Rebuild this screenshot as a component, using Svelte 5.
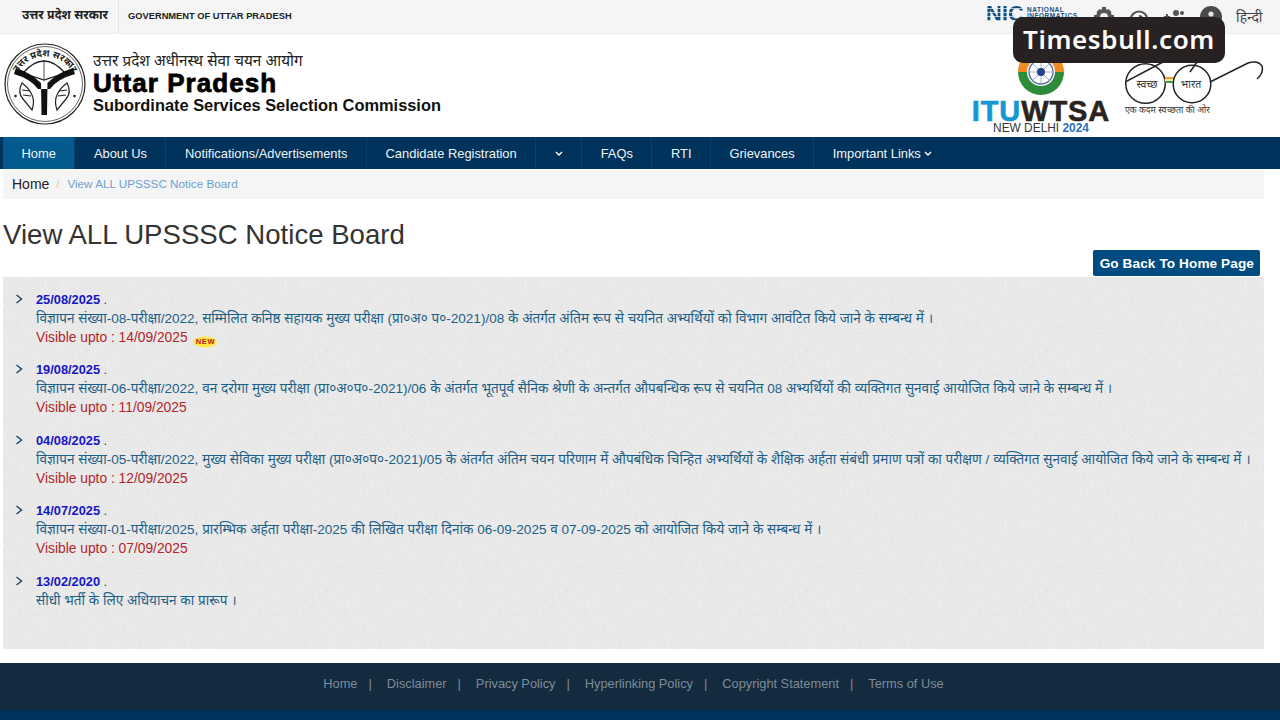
<script>
    const topIcons = ['gear', 'contrast', 'people', 'user'];

    const nav = [
        { label: 'Home', active: true },
        { label: 'About Us' },
        { label: 'Notifications/Advertisements' },
        { label: 'Candidate Registration' },
        { label: '', caret: true },
        { label: 'FAQs' },
        { label: 'RTI' },
        { label: 'Grievances' },
        { label: 'Important Links', caret: true }
    ];

    const notices = [
        {
            date: '25/08/2025',
            text: 'विज्ञापन संख्या-08-परीक्षा/2022, सम्मिलित कनिष्ठ सहायक मुख्य परीक्षा (प्रा०अ० प०-2021)/08 के अंतर्गत अंतिम रूप से चयनित अभ्यर्थियों को विभाग आवंटित किये जाने के सम्बन्ध में ।',
            upto: '14/09/2025',
            isNew: true
        },
        {
            date: '19/08/2025',
            text: 'विज्ञापन संख्या-06-परीक्षा/2022, वन दरोगा मुख्य परीक्षा (प्रा०अ०प०-2021)/06 के अंतर्गत भूतपूर्व सैनिक श्रेणी के अन्तर्गत औपबन्धिक रूप से चयनित 08 अभ्यर्थियों की व्यक्तिगत सुनवाई आयोजित किये जाने के सम्बन्ध में ।',
            upto: '11/09/2025'
        },
        {
            date: '04/08/2025',
            text: 'विज्ञापन संख्या-05-परीक्षा/2022, मुख्य सेविका मुख्य परीक्षा (प्रा०अ०प०-2021)/05 के अंतर्गत अंतिम चयन परिणाम में औपबंधिक चिन्हित अभ्यर्थियों के शैक्षिक अर्हता संबंधी प्रमाण पत्रों का परीक्षण / व्यक्तिगत सुनवाई आयोजित किये जाने के सम्बन्ध में ।',
            upto: '12/09/2025'
        },
        {
            date: '14/07/2025',
            text: 'विज्ञापन संख्या-01-परीक्षा/2025, प्रारम्भिक अर्हता परीक्षा-2025 की लिखित परीक्षा दिनांक 06-09-2025 व 07-09-2025 को आयोजित किये जाने के सम्बन्ध में ।',
            upto: '07/09/2025'
        },
        {
            date: '13/02/2020',
            text: 'सीधी भर्ती के लिए अधियाचन का प्रारूप ।'
        }
    ];

    const footerLinks = ['Home', 'Disclaimer', 'Privacy Policy', 'Hyperlinking Policy', 'Copyright Statement', 'Terms of Use'];
</script>

<div class="page">
    <div class="topbar">
        <div class="gov-hi">उत्तर प्रदेश सरकार</div>
        <div class="gov-en">GOVERNMENT OF UTTAR PRADESH</div>
        <div class="top-right">
            <div class="nic">
                <span class="nic-big">NIC</span>
                <span class="nic-small">NATIONAL<br>INFORMATICS</span>
            </div>
            {#each topIcons as icon}
                <div class="top-icon" class:user={icon === 'user'}>
                    <svg width="22" height="22" viewBox="0 0 22 22" fill="#555">
                        {#if icon === 'gear'}
                            <circle cx="11" cy="11" r="6" fill="none" stroke="#555" stroke-width="4"/>
                            <path d="M9 1h4v4H9zM9 17h4v4H9zM1 9h4v4H1zM17 9h4v4h-4z"/>
                            <path d="M3.5 6l3-3 3 3-3 3zM12.5 6l3-3 3 3-3 3zM3.5 16l3-3 3 3-3 3zM12.5 16l3-3 3 3-3 3z"/>
                        {:else if icon === 'contrast'}
                            <circle cx="11" cy="14" r="8.5" fill="none" stroke="#555" stroke-width="2.2"/>
                            <path d="M11 9a5 5 0 0 1 0 10z"/>
                        {:else if icon === 'people'}
                            <circle cx="14" cy="7" r="3"/>
                            <circle cx="20" cy="7" r="2"/>
                            <path d="M2 10h2V8h2v2h2v2H6v2H4v-2H2z"/>
                            <path d="M9 18c0-6 10-6 10 0z"/>
                        {:else}
                            <circle cx="11" cy="11" r="11" fill="#4a4a4a"/>
                            <circle cx="11" cy="8" r="2.6" fill="#e4e4e4"/>
                            <path d="M6.5 16l1.5-4.5h6l1.5 4.5z" fill="#e4e4e4"/>
                        {/if}
                    </svg>
                </div>
            {/each}
            <div class="lang">हिन्दी</div>
        </div>
    </div>

    <header class="head">
        <div class="brand">
            <svg class="emblem" width="82" height="82" viewBox="0 0 82 82">
                <circle cx="41" cy="41" r="40" fill="#fff" stroke="#222" stroke-width="1.2"/>
                <circle cx="41" cy="41" r="37.5" fill="none" stroke="#222" stroke-width="0.7"/>
                <path id="ring" d="M10.5 50a31 31 0 1 1 61 0" fill="none"/>
                <text class="emblem-text" text-anchor="middle"><textPath href="#ring" startOffset="50%">उत्तर प्रदेश सरकार</textPath></text>
                <path d="M19 30 Q40 6 61 30 L40 37 Z" fill="none" stroke="#222" stroke-width="1.3"/>
                <path d="M40 17v20" stroke="#222" stroke-width="0.8"/>
                <path d="M12 25 Q27 30 37 40 L37.5 72 L43 72 L43.5 40 Q53 30 69 25 L71 31 Q53 36 46 46 L34 46 Q27 36 10 31 Z" fill="#111"/>
                <path d="M18 40 q-5 9 1 16 l9 11 q3-9 0-15 q-3-7-10-12z" fill="#fff" stroke="#222" stroke-width="1.2"/>
                <path d="M63 40 q5 9-1 16 l-9 11 q-3-9 0-15 q3-7 10-12z" fill="#fff" stroke="#222" stroke-width="1.2"/>
                <path d="M18 47l8 1M19 52l8 1M63 47l-8 1M62 52l-8 1" stroke="#222" stroke-width="1.2"/>
                <circle cx="11.5" cy="53" r="1.3" fill="#222"/>
                <circle cx="70.5" cy="53" r="1.3" fill="#222"/>
            </svg>
            <div class="brand-text">
                <div class="brand-hi">उत्तर प्रदेश अधीनस्थ सेवा चयन आयोग</div>
                <div class="brand-up">Uttar Pradesh</div>
                <div class="brand-sub">Subordinate Services Selection Commission</div>
            </div>
        </div>
        <div class="logos">
            <div class="itu">
                <svg class="itu-mark" width="48" height="46" viewBox="0 0 48 46">
                    <path d="M1 23a23 23 0 0 1 46 0z" fill="#f08a24"/>
                    <path d="M1 23a23 23 0 0 0 46 0z" fill="#2e8b3a"/>
                    <circle cx="24" cy="23" r="14" fill="#fff"/>
                    <circle cx="24" cy="23" r="12" fill="none" stroke="#5a6fa8" stroke-width="1.4"/>
                    <path d="M24 11v24M12 23h24M15.5 14.5l17 17M32.5 14.5l-17 17" stroke="#8a9ac4" stroke-width="0.8"/>
                    <circle cx="24" cy="23" r="4" fill="#27408b"/>
                </svg>
                <div class="itu-word"><span class="itu-blue">ITU</span><span class="itu-dark">WTSA</span></div>
                <div class="itu-sub">NEW DELHI <span class="itu-year">2024</span></div>
            </div>
            <div class="swachh">
                <svg width="140" height="45" viewBox="0 0 140 45">
                    <circle cx="20.5" cy="23.5" r="19.8" fill="none" stroke="#222" stroke-width="1.5"/>
                    <circle cx="67" cy="24" r="18.8" fill="none" stroke="#222" stroke-width="1.5"/>
                    <path d="M40 18h8" stroke="#f0a030" stroke-width="2"/>
                    <path d="M40 20h8" stroke="#f3e7a0" stroke-width="2"/>
                    <path d="M40 22h8" stroke="#3f9a4a" stroke-width="2"/>
                    <path d="M0 22L38 2M65 12l7-10M85 22L123 3Q133 0 137 6Q139 13 132 19" fill="none" stroke="#222" stroke-width="1.5"/>
                    <text x="22" y="28" class="sw-t">स्वच्छ</text>
                    <text x="66" y="28" class="sw-t">भारत</text>
                </svg>
                <div class="sw-tag">एक कदम स्वच्छता की ओर</div>
            </div>
        </div>
    </header>

    <nav class="nav">
        {#each nav as item}
            <div class="nav-item" class:active={item.active}>
                {item.label}
                {#if item.caret}
                    <svg class="caret" width="8" height="6" viewBox="0 0 8 6"><path d="M1 1l3 3 3-3" fill="none" stroke="#fff" stroke-width="1.4"/></svg>
                {/if}
            </div>
        {/each}
    </nav>

    <div class="crumb">
        <span class="crumb-home">Home</span>
        <span class="crumb-sep">/</span>
        <span class="crumb-here">View ALL UPSSSC Notice Board</span>
    </div>

    <h1>View ALL UPSSSC Notice Board</h1>

    <div class="back-row">
        <div class="back">Go Back To Home Page</div>
    </div>

    <div class="board">
        {#each notices as n}
            <div class="notice">
                <svg class="arrow" width="8" height="10" viewBox="0 0 8 10"><path d="M1.5 1l5 4-5 4" fill="none" stroke="#1c4a6e" stroke-width="1.5"/></svg>
                <div class="notice-body">
                    <div class="date-line"><b>{n.date}</b> .</div>
                    <div class="text">{n.text}</div>
                    <div class="upto">
                        {#if n.upto}
                            Visible upto : {n.upto}
                        {/if}
                        {#if n.isNew}
                            <span class="new">NEW</span>
                        {/if}
                    </div>
                </div>
            </div>
        {/each}
    </div>

    <footer class="foot">
        <div class="foot-links">
            {#each footerLinks as link, i}
                <span>{link}</span>
                {#if i < footerLinks.length - 1}
                    <span class="foot-sep">|</span>
                {/if}
            {/each}
        </div>
    </footer>
    <div class="foot-bottom"></div>

    <div class="watermark">Timesbull.com</div>
</div>

<style>
    :global(body) {
        margin: 0;
        background: #fff;
    }

    .page {
        position: relative;
        width: 1280px;
        height: 720px;
        overflow: hidden;
        font-family: "Liberation Sans", "Noto Sans", sans-serif;
        color: #333;
    }

    .topbar {
        height: 33px;
        background: #f5f5f5;
        border-bottom: 1px solid #ececec;
        display: flex;
        align-items: center;
        padding-left: 22px;
    }

    .gov-hi {
        font-size: 12.3px;
        font-weight: 700;
        color: #222;
        padding-right: 10px;
        border-right: 1px solid #e6e6e6;
        height: 33px;
        line-height: 30px;
    }

    .gov-en {
        font-size: 9.3px;
        font-weight: 700;
        color: #222;
        padding: 0 0 2px 9px;
    }

    .top-right {
        margin-left: auto;
        display: flex;
        align-items: center;
        height: 33px;
    }

    .nic {
        display: flex;
        align-items: flex-start;
        gap: 3px;
        width: 101px;
        height: 33px;
        padding-top: 1px;
        box-sizing: border-box;
    }

    .nic-big {
        font-size: 22px;
        line-height: 25px;
        font-weight: 700;
        color: transparent;
        background: repeating-linear-gradient(180deg, #0f4f7f 0 3px, #a9c6da 3px 4px);
        -webkit-background-clip: text;
        background-clip: text;
    }

    .nic-small {
        font-size: 6.5px;
        font-weight: 700;
        line-height: 5.5px;
        letter-spacing: 0.55px;
        padding-top: 6px;
        color: #134f80;
    }

    .top-icon {
        width: 34.5px;
        display: flex;
        justify-content: center;
    }

    .top-icon.user {
        margin-left: 3px;
    }

    .lang {
        font-size: 14px;
        color: #444;
        margin-left: 8px;
        width: 44px;
    }

    .head {
        height: 103px;
        display: flex;
        justify-content: space-between;
        background: #fff;
    }

    .brand {
        display: flex;
        padding: 9px 0 0 4px;
        gap: 7px;
    }

    .emblem {
        display: block;
    }

    .emblem-text {
        font-size: 9.5px;
        font-weight: 700;
        fill: #222;
    }

    .brand-text {
        padding-top: 7px;
    }

    .brand-hi {
        font-size: 15.3px;
        line-height: 21px;
        color: #222;
    }

    .brand-up {
        font-size: 26px;
        font-weight: 700;
        color: #000;
        line-height: 25px;
        letter-spacing: 1.05px;
        -webkit-text-stroke: 0.8px #000;
    }

    .brand-sub {
        font-size: 16.4px;
        font-weight: 700;
        color: #111;
        line-height: 19px;
    }

    .logos {
        display: flex;
        padding-right: 15px;
        gap: 15px;
    }

    .itu {
        width: 138px;
        display: flex;
        flex-direction: column;
        align-items: center;
        padding-top: 15px;
    }

    .itu-mark {
        display: block;
    }

    .itu-word {
        margin-top: 5px;
        font-size: 29px;
        font-weight: 700;
        line-height: 22px;
        letter-spacing: 0.9px;
        -webkit-text-stroke: 0.6px currentColor;
        white-space: nowrap;
    }

    .itu-blue {
        color: #1597d5;
    }

    .itu-dark {
        color: #2b2320;
    }

    .itu-sub {
        font-size: 11.9px;
        font-weight: 400;
        color: #333;
        line-height: 12px;
        white-space: nowrap;
    }

    .itu-year {
        font-weight: 700;
        color: #2a6fb5;
    }

    .swachh {
        width: 140px;
        padding-top: 26px;
    }

    .swachh svg {
        display: block;
    }

    .sw-t {
        font-size: 10.5px;
        text-anchor: middle;
        fill: #333;
    }

    .sw-tag {
        font-size: 8.8px;
        line-height: 10px;
        color: #333;
    }

    .nav {
        height: 32px;
        background: #00335b;
        display: flex;
        padding-left: 3px;
    }

    .nav-item {
        display: flex;
        align-items: center;
        gap: 3px;
        padding: 0 18.5px;
        color: #eef3f7;
        font-size: 12.9px;
        border-right: 1px solid #0a4169;
    }

    .nav-item.active {
        background: #025a8f;
    }

    .nav-item:last-child {
        border-right: none;
    }

    .caret {
        margin-top: 1px;
    }

    .crumb {
        height: 27px;
        padding: 0 0 2px 9px;
        margin: 1px 16px 0 3px;
        background: #f5f5f5;
        display: flex;
        align-items: center;
        gap: 7px;
    }

    .crumb-home {
        font-size: 14px;
        color: #222;
    }

    .crumb-sep {
        color: #ccc;
        font-size: 11px;
    }

    .crumb-here {
        color: #6fa0cf;
        font-size: 11.7px;
        margin-left: 1px;
    }

    h1 {
        margin: 17px 0 0 3px;
        font-size: 27.6px;
        font-weight: 400;
        line-height: 37px;
        color: #333;
    }

    .back-row {
        display: flex;
        justify-content: flex-end;
        padding-right: 20px;
        margin-top: -3px;
    }

    .back {
        height: 26px;
        line-height: 27px;
        padding: 0 6px 0 7px;
        background: #004b7f;
        color: #fff;
        font-size: 13.6px;
        font-weight: 700;
        border-radius: 2px;
        letter-spacing: 0.1px;
    }

    .board {
        margin: 1px 16px 0 3px;
        height: 372px;
        box-sizing: border-box;
        padding-top: 14px;
        background-color: #eeeeee;
        background-image: url("data:image/svg+xml,%3Csvg xmlns='http://www.w3.org/2000/svg' width='240' height='240'%3E%3Cfilter id='n'%3E%3CfeTurbulence type='fractalNoise' baseFrequency='1.3' numOctaves='2'/%3E%3CfeColorMatrix values='0 0 0 0 .6 0 0 0 0 .6 0 0 0 0 .6 0 0 0 .6 -.15'/%3E%3C/filter%3E%3Crect width='240' height='240' filter='url(%23n)'/%3E%3C/svg%3E");
    }

    .notice {
        display: flex;
        height: 70.4px;
    }

    .arrow {
        margin: 3px 0 0 12px;
        flex: none;
    }

    .notice-body {
        margin-left: 13px;
        white-space: nowrap;
    }

    .date-line {
        height: 19px;
        line-height: 18px;
        font-size: 12.8px;
        color: #1c3f6e;
    }

    .date-line b {
        color: #1616c8;
    }

    .text {
        height: 18px;
        line-height: 18px;
        font-size: 13.55px;
        color: #1d5f86;
    }

    .upto {
        height: 18px;
        line-height: 18px;
        margin-top: 1px;
        font-size: 13.8px;
        color: #b3262b;
    }

    .new {
        display: inline-block;
        width: 26px;
        height: 12px;
        margin-left: 1px;
        vertical-align: -2px;
        text-align: center;
        font-size: 7.5px;
        font-weight: 700;
        letter-spacing: 0.6px;
        line-height: 12px;
        color: #b8201c;
        background: radial-gradient(ellipse closest-side, #ffe53d 75%, rgba(255, 232, 77, 0.5) 90%, transparent 100%);
    }

    .foot {
        position: absolute;
        left: 0;
        right: 0;
        top: 663px;
        height: 47px;
        background: #132a3f;
        display: flex;
        justify-content: center;
    }

    .foot-links {
        display: flex;
        padding-top: 13px;
        font-size: 12.8px;
        color: #7f8c98;
        margin-right: 13px;
    }

    .foot-sep {
        margin: 0 15px 0 11px;
    }

    .foot-bottom {
        position: absolute;
        left: 0;
        right: 0;
        top: 710px;
        height: 10px;
        background: #00335b;
    }

    .watermark {
        position: absolute;
        left: 1013px;
        top: 17px;
        width: 212px;
        height: 46px;
        line-height: 45px;
        text-align: center;
        background: #272221;
        color: #fff;
        border-radius: 10px;
        font-family: "Noto Sans", "Open Sans", sans-serif;
        font-weight: 600;
        font-size: 26px;
        letter-spacing: 0.6px;
    }
</style>
